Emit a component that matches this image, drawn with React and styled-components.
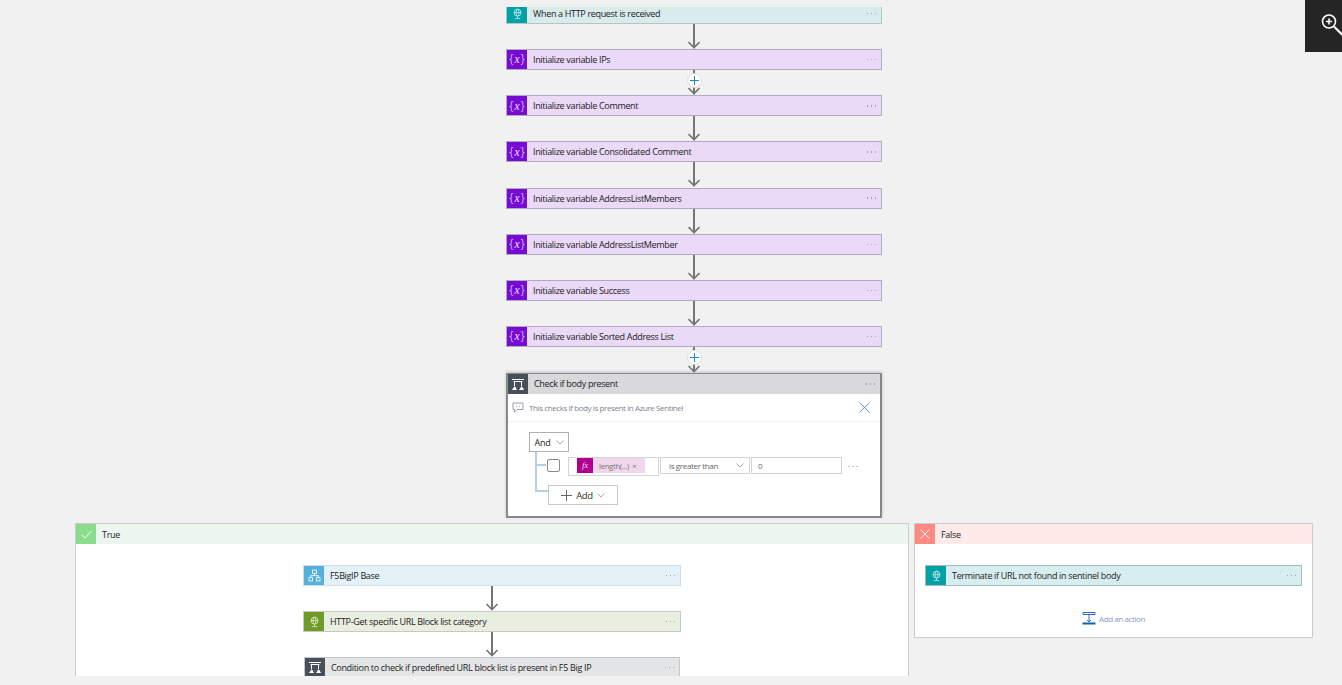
import React from "react";
import styled, { createGlobalStyle } from "styled-components";

const Global = createGlobalStyle`
  html, body { margin: 0; padding: 0; background: #f1f1f1; }
  body { font-family: "Open Sans", "Liberation Sans", sans-serif; overflow: hidden; }
`;

const tones = {
  teal: { tile: "#00a1a7", bg: "#d9ebed", line: "#b7c4c6" },
  purple: { tile: "#770bd6", bg: "#ead9f7", line: "#b3a9bd" },
  blue: { tile: "#56b0dc", bg: "#e3f1f8", line: "#d4dde2" },
  green: { tile: "#6f9a27", bg: "#e8eee0", line: "#c6cbc0" },
  slate: { tile: "#484f58", bg: "#e4e5e6", line: "#c5c6c7" },
  sea: { tile: "#00a1a7", bg: "#d7eef0", line: "#aab8ba" },
};

const Viewport = styled.div`
  position: relative;
  height: 676px;
  overflow: hidden;
`;
const Canvas = styled.div`
  display: flex;
  flex-direction: column;
  align-items: center;
  padding: 3px 0 0 46px;
`;
const ClipTop = styled.div`
  height: 7px;
  background: #f1f1f1;
  position: absolute;
  top: 0;
  left: 0;
  right: 0;
  z-index: 2;
`;
const ZoomButton = styled.div`
  position: absolute;
  top: 0;
  right: 0;
  width: 37px;
  height: 52px;
  background: #252525;
  z-index: 3;
  overflow: hidden;
`;
const CardBox = styled.div`
  box-sizing: border-box;
  width: ${(p) => p.$width || 376}px;
  height: 21px;
  display: flex;
  align-items: stretch;
  background: ${(p) => p.$tone.bg};
  border: 1px solid ${(p) => p.$tone.line};
  flex: none;
`;
const Tile = styled.div`
  width: 20px;
  flex: none;
  display: flex;
  align-items: center;
  justify-content: center;
  background: ${(p) => p.$color};
  color: #fff;
`;
const Title = styled.div`
  flex: 1;
  padding-left: 6px;
  font-size: 9px;
  letter-spacing: -0.33px;
  line-height: 20px;
  color: #222;
  white-space: nowrap;
`;
const PanelTitle = styled(Title)`
  line-height: 21px;
`;
const Dots = styled.div`
  width: 14.5px;
  flex: none;
  display: flex;
  gap: 2.5px;
  align-items: center;
  & i {
    width: 1.5px;
    height: 1.5px;
    background: #a3a3a3;
  }
`;
const VarGlyph = styled.span`
  font-family: "Open Sans", sans-serif;
  font-size: 12px;
  font-weight: 300;
  line-height: 1;
  color: #efe2fa;
  & em {
    font-family: "Liberation Serif", serif;
    font-size: 11.5px;
    margin: 0 1px;
  }
`;
const ConnectorBox = styled.div`
  width: 16px;
  height: ${(p) => p.$h}px;
  flex: none;
  position: relative;
`;
const PlusCircle = styled.div`
  position: absolute;
  left: 0.5px;
  top: 3px;
  box-sizing: border-box;
  width: 15px;
  height: 15px;
  border-radius: 50%;
  background: #fff;
  border: 1px solid #dcdcdc;
  display: flex;
  align-items: center;
  justify-content: center;
`;
const ConditionCard = styled.div`
  box-sizing: border-box;
  width: 376px;
  height: 145px;
  flex: none;
  background: #fff;
  border: 2px solid #85898f;
  border-top-width: 1.5px;
  box-shadow: 0 -1px 3px rgba(0, 0, 0, 0.2);
  display: flex;
  flex-direction: column;
`;
const ConditionHead = styled.div`
  height: 20px;
  flex: none;
  display: flex;
  background: #d8d9db;
`;
const CommentRow = styled.div`
  height: 27px;
  flex: none;
  display: flex;
  align-items: center;
  padding: 0 10px 0 4px;
  border-bottom: 1px solid #f2f2f2;
`;
const CommentText = styled.div`
  flex: 1;
  margin-left: 5px;
  font-size: 8px;
  letter-spacing: -0.4px;
  color: #7d8590;
`;
const Builder = styled.div`
  position: relative;
  padding: 10px 0 0 21px;
  flex: 1;
`;
const AndBox = styled.div`
  box-sizing: border-box;
  width: 40px;
  height: 20px;
  border: 1px solid #b0b0b0;
  display: flex;
  align-items: center;
  justify-content: center;
  gap: 5px;
  font-size: 9px;
  letter-spacing: -0.2px;
  color: #222;
`;
const Tree = styled.div`
  position: absolute;
  left: 27px;
  top: 30px;
  width: 12px;
  height: 38px;
  border-left: 2px solid #b6cde6;
  border-bottom: 2px solid #b6cde6;
  &::before {
    content: "";
    position: absolute;
    left: 0;
    top: 12px;
    width: 9px;
    height: 2px;
    background: #b6cde6;
  }
`;
const Row = styled.div`
  display: flex;
  align-items: flex-start;
  margin: 5px 0 0 17px;
`;
const Check = styled.div`
  box-sizing: border-box;
  width: 13px;
  height: 13px;
  margin: 2px 8px 0 1px;
  border: 1px solid #8a8a8a;
  border-radius: 2px;
  flex: none;
`;
const ExprBox = styled.div`
  box-sizing: border-box;
  width: 91px;
  height: 19px;
  border: 1px solid #d4d4d4;
  padding-left: 8px;
  flex: none;
`;
const Token = styled.div`
  width: 68px;
  height: 15px;
  display: flex;
  align-items: center;
  background: #f2d6ec;
  font-size: 7.7px;
  letter-spacing: -0.3px;
  color: #777;
`;
const FxTile = styled.div`
  width: 16px;
  height: 15px;
  background: #b0008f;
  color: #f7d7f1;
  font-family: "Liberation Serif", serif;
  font-style: italic;
  font-size: 9px;
  line-height: 15px;
  text-align: center;
  margin-right: 6px;
  flex: none;
`;
const SelectBox = styled.div`
  box-sizing: border-box;
  width: 90px;
  height: 17px;
  margin-left: 1px;
  border: 1px solid #d4d4d4;
  display: flex;
  align-items: center;
  justify-content: space-between;
  padding: 0 5px 0 8px;
  font-size: 8px;
  letter-spacing: -0.35px;
  color: #666;
  flex: none;
`;
const ValueBox = styled(SelectBox)`
  width: 91px;
  justify-content: flex-start;
  padding-left: 6px;
`;
const RowDots = styled(Dots)`
  margin: 8px 0 0 6px;
  height: 3px;
  & i {
    background: #bfc7d6;
  }
`;
const AddButton = styled.div`
  box-sizing: border-box;
  width: 70px;
  height: 20px;
  margin: 9px 0 0 19px;
  border: 1px solid #c8c8c8;
  background: #fff;
  display: flex;
  align-items: center;
  justify-content: center;
  gap: 4px;
  font-size: 9.5px;
  letter-spacing: -0.3px;
  color: #333;
`;
const Branches = styled.div`
  display: flex;
  align-items: flex-start;
  gap: 5px;
  margin-top: 5px;
  flex: none;
`;
const Panel = styled.div`
  box-sizing: border-box;
  width: ${(p) => p.$width}px;
  height: ${(p) => p.$height}px;
  background: #fff;
  border: 1.5px solid #cbcbcb;
  display: flex;
  flex-direction: column;
  align-items: center;
`;
const PanelHead = styled.div`
  align-self: stretch;
  height: 20px;
  flex: none;
  display: flex;
  background: ${(p) => p.$bg};
  margin-bottom: 21px;
`;
const AddAction = styled.div`
  margin-top: 26px;
  display: flex;
  align-items: center;
  gap: 3px;
  font-size: 8px;
  letter-spacing: -0.4px;
  color: #7f9cc8;
`;

const ICON_COLOR = "#fff";

function GlobeIcon() {
  return (
    <svg width="11" height="12" viewBox="0 0 12 13" fill="none" stroke={ICON_COLOR} strokeWidth="0.8" opacity="0.85">
      <circle cx="6" cy="5" r="3.8" />
      <ellipse cx="6" cy="5" rx="1.6" ry="3.8" />
      <path d="M2.2 5h7.6M6 9v2M3 11.5h6" />
    </svg>
  );
}

function ConditionIcon() {
  return (
    <svg width="14" height="13" viewBox="0 0 14 13" fill="none" stroke={ICON_COLOR} strokeWidth="1">
      <path d="M1 1.5h12M2.5 3.5h9M3.5 3.5v5M10.5 3.5v5" />
      <path d="M1 12l2-3h1.5L6 12zM8 12l2-3h1.5l1.5 3z" fill={ICON_COLOR} stroke="none" />
    </svg>
  );
}

function ScopeIcon() {
  return (
    <svg width="13" height="13" viewBox="0 0 13 13" fill="none" stroke={ICON_COLOR} strokeWidth="0.8">
      <rect x="4.6" y="1" width="3.8" height="3.4" />
      <rect x="1" y="8.6" width="3.4" height="3.4" />
      <rect x="8.6" y="8.6" width="3.4" height="3.4" />
      <path d="M6.5 4.4v2.2M2.7 8.6V6.6h7.6v2" />
    </svg>
  );
}

function Chevron({ color = "#999", size = 8 }) {
  return (
    <svg width={size} height={size / 2 + 1} viewBox="0 0 8 5" fill="none" stroke={color} strokeWidth="0.8">
      <path d="M0.5 0.5L4 4l3.5-3.5" />
    </svg>
  );
}

function Card({ tone, icon, title, width }) {
  const t = tones[tone];
  return (
    <CardBox $tone={t} $width={width}>
      <Tile $color={t.tile}>{icon}</Tile>
      <Title>{title}</Title>
      <Dots>
        <i />
        <i />
        <i />
      </Dots>
    </CardBox>
  );
}

function Connector({ h = 25, plus }) {
  return (
    <ConnectorBox $h={h}>
      <svg width="16" height={h} viewBox={`0 0 16 ${h}`} fill="none" stroke="#757575" style={{ display: "block" }}>
        <path d={`M8 0V${h - 1}`} strokeWidth="2" />
        <path d={`M2.5 ${h - 7}L8 ${h - 1.5}l5.5-5.5`} strokeWidth="1.6" />
      </svg>
      {plus && (
        <PlusCircle>
          <svg width="9" height="9" viewBox="0 0 9 9" stroke="#1b84d8" strokeWidth="1">
            <path d="M4.5 0v9M0 4.5h9" />
          </svg>
        </PlusCircle>
      )}
    </ConnectorBox>
  );
}

const variables = [
  "Initialize variable IPs",
  "Initialize variable Comment",
  "Initialize variable Consolidated Comment",
  "Initialize variable AddressListMembers",
  "Initialize variable AddressListMember",
  "Initialize variable Success",
  "Initialize variable Sorted Address List",
];

export default function App() {
  return (
    <Viewport>
      <Global />
      <ClipTop />
      <Canvas>
        <Card tone="teal" icon={<GlobeIcon />} title="When a HTTP request is received" />
        {variables.map((name, i) => (
          <React.Fragment key={name}>
            <Connector plus={i === 1} h={25.17} />
            <Card
              tone="purple"
              icon={
                <VarGlyph>
                  {"{"}
                  <em>x</em>
                  {"}"}
                </VarGlyph>
              }
              title={name}
            />
          </React.Fragment>
        ))}
        <Connector plus h={26} />
        <ConditionCard>
          <ConditionHead>
            <Tile $color="#484f58">
              <ConditionIcon />
            </Tile>
            <Title>Check if body present</Title>
            <Dots>
              <i />
              <i />
              <i />
            </Dots>
          </ConditionHead>
          <CommentRow>
            <svg width="12" height="11" viewBox="0 0 12 11" fill="none" stroke="#7d8a99" strokeWidth="0.8">
              <path d="M1 1h10v6.5H5L2.5 10V7.5H1z" />
              <path d="M4 4.2h1M7 4.2h1" />
            </svg>
            <CommentText>This checks if body is present in Azure Sentinel</CommentText>
            <svg width="11" height="11" viewBox="0 0 11 11" stroke="#3f7fd0" strokeWidth="0.8">
              <path d="M0.5 0.5l10 10M10.5 0.5l-10 10" />
            </svg>
          </CommentRow>
          <Builder>
            <Tree />
            <AndBox>
              And <Chevron />
            </AndBox>
            <Row>
              <Check />
              <ExprBox>
                <Token>
                  <FxTile>fx</FxTile>
                  length(...)&nbsp;&nbsp;×
                </Token>
              </ExprBox>
              <SelectBox>
                is greater than <Chevron />
              </SelectBox>
              <ValueBox>0</ValueBox>
              <RowDots>
                <i />
                <i />
                <i />
              </RowDots>
            </Row>
            <AddButton>
              <svg width="11" height="11" viewBox="0 0 11 11" stroke="#555" strokeWidth="0.9">
                <path d="M5.5 0v11M0 5.5h11" />
              </svg>
              Add <Chevron />
            </AddButton>
          </Builder>
        </ConditionCard>
        <Branches>
          <Panel $width={834} $height={200}>
            <PanelHead $bg="#edf6ee">
              <Tile $color="#8bdc8c">
                <svg width="11" height="9" viewBox="0 0 11 9" fill="none" stroke="#fff" strokeWidth="0.9">
                  <path d="M0.5 5L4 8l6.5-7" />
                </svg>
              </Tile>
              <PanelTitle>True</PanelTitle>
            </PanelHead>
            <Card tone="blue" width={378} icon={<ScopeIcon />} title="F5BigIP Base" />
            <Connector />
            <Card tone="green" width={378} icon={<GlobeIcon />} title="HTTP-Get specific URL Block list category" />
            <Connector />
            <Card tone="slate" width={376} icon={<ConditionIcon />} title="Condition to check if predefined URL block list is present in F5 Big IP" />
          </Panel>
          <Panel $width={399} $height={115}>
            <PanelHead $bg="#ffeaea">
              <Tile $color="#ff8a82">
                <svg width="10" height="10" viewBox="0 0 10 10" stroke="#fff" strokeWidth="0.9">
                  <path d="M0.5 0.5l9 9M9.5 0.5l-9 9" />
                </svg>
              </Tile>
              <PanelTitle>False</PanelTitle>
            </PanelHead>
            <Card tone="sea" width={377} icon={<GlobeIcon />} title="Terminate if URL not found in sentinel body" />
            <AddAction>
              <svg width="14" height="13" viewBox="0 0 14 13" fill="none" stroke="#2f6fbe" strokeWidth="1">
                <path d="M1 0.5h12v2H1zM7 2.5v7M5 8l2 2 2-2" />
                <path d="M0.5 11.5h13" strokeWidth="2" stroke="#0f5fb5" />
              </svg>
              Add an action
            </AddAction>
          </Panel>
        </Branches>
      </Canvas>
      <ZoomButton>
        <svg width="37" height="52" viewBox="0 0 37 52" fill="none" stroke="#fff" strokeWidth="1.6">
          <circle cx="24" cy="21.5" r="6.5" />
          <path d="M21 21.5h6M24 18.5v6" />
          <path d="M29 26.5L38 35.5" strokeWidth="2" />
        </svg>
      </ZoomButton>
    </Viewport>
  );
}
